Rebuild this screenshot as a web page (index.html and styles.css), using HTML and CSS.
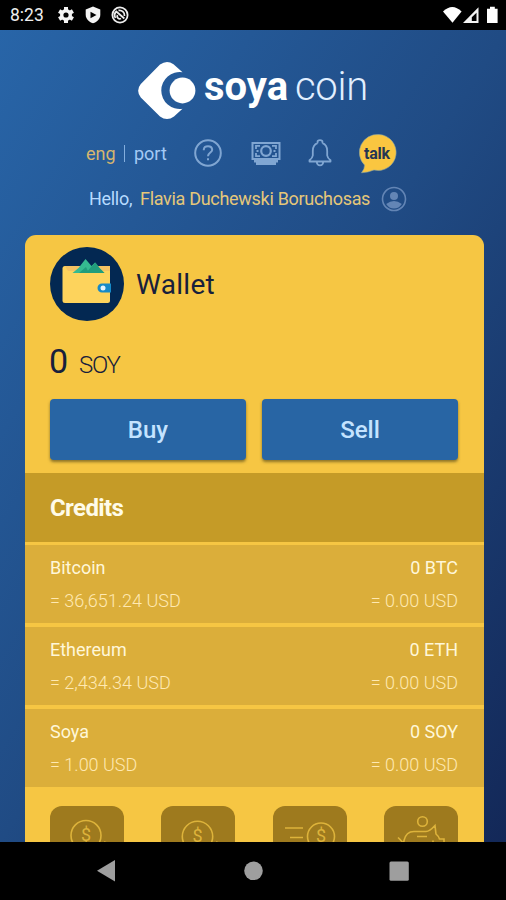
FILE: index.html
```
<!DOCTYPE html>
<html lang="en">
<head>
  <meta charset="UTF-8" />
  <meta name="viewport" content="width=device-width, initial-scale=1.0" />
  <title>Soya Coin</title>
  <link rel="stylesheet" href="styles.css">
</head>
<body>
  <div class="status-bar">
    <span class="time">8:23</span>
    <svg class="status-left" width="72" height="20" viewBox="0 0 72 20">
      <g fill="none" stroke="#f4f4f4">
        <circle cx="8" cy="10" r="4.3" stroke-width="3.4"/>
        <path stroke-width="4" d="M8 2v3M8 15v3M1.1 6l2.5 1.5M12.4 12.5l2.5 1.5M1.1 14l2.5-1.5M12.4 7.5l2.5-1.5"/>
      </g>
      <path fill="#f4f4f4" d="M35 1.5l7.3 3v5.2c0 4-3 7.2-7.3 8.6-4.300-1.400-7.300-4.600-7.300-8.600v-5.200z"/>
      <path fill="#000" d="M32.500 6.800l6 3.200-6 3.200z"/>
      <circle cx="62" cy="10" r="7.600" fill="none" stroke="#eee" stroke-width="1.800"/>
      <path d="M57.500 13a5.200 5.200 0 0 1 .8-6.500l8 7M60.500 5.500a5 5 0 0 1 6 5.500M59.500 10a2.600 2.600 0 0 0 3.500 3.500" fill="none" stroke="#eee" stroke-width="1.800"/>
    </svg>
    <svg class="status-right" width="56" height="20" viewBox="0 0 56 20">
      <path fill="#fff" d="M0 6.500Q9.300-2.500 18.600 6.500L9.500 17.800z"/>
      <path fill="#f4f4f4" fill-rule="evenodd" d="M20 18L35.500 2.300V18zM28.800 12.200v3.800h4.700V7.800z"/>
      <path fill="#fff" d="M44 3.700h3V1.700h4.800v2h2.800V18H44z"/>
    </svg>
  </div>

  <main class="app">
    <div class="logo">
      <svg width="62" height="62" viewBox="0 0 62 62">
        <path fill="#fff" d="M23 4.500Q30-.5 36.500 4.300L45.500 12.200A18.500 18.500 0 1 0 45.500 48.800L37 56.500Q30 61.500 23 56.500L3.800 37.500Q-1.500 30.500 3.800 24z"/>
        <circle cx="45.500" cy="30.500" r="12.900" fill="#fff"/>
      </svg>
      <span class="logo-bold">soya</span><span class="logo-light">coin</span>
    </div>

    <div class="toolbar">
      <div class="languages"><span class="active">eng</span><span class="divider"></span><span class="port">port</span></div>
      <svg class="icon-help" width="28" height="28" viewBox="0 0 28 28" fill="none" stroke="#80a6d2" stroke-width="2">
        <circle cx="14" cy="14" r="12.800"/>
        <path d="M9.800 11.200V10.500Q10 7.200 14 7.200T18.200 10.700C18.200 13.600 14 13.500 14 17.300M14 19.200v2"/>
      </svg>
      <svg class="icon-money" width="30" height="25" viewBox="0 0 30 25" fill="none" stroke="#80a6d2">
        <path stroke-width="2" d="M1.500 2h27v16h-27z"/>
        <circle cx="15" cy="10" r="4.800" stroke-width="2.200"/>
        <path stroke-width="1.800" d="M9 4.800H5V8M5 12v3.200h4M21 4.800h4V8M25 12v3.200h-4M5.500 10h2M22.500 10h2"/>
        <path stroke-width="2.600" d="M3 20.200h24M5 22.800h20"/>
      </svg>
      <svg class="icon-bell" width="24" height="28" viewBox="0 0 24 28" fill="none" stroke="#80a6d2" stroke-width="1.800" stroke-linejoin="round">
        <path d="M9.500 4.200V3Q9.500 1.200 12 1.200T14.500 3v1.200M9.500 4.200C6 5.500 4.800 8.500 4.800 12v4.500Q4.500 19 1.500 21.300v1.200h21v-1.200Q19.500 19 19.200 16.500V12C19.200 8.500 18 5.500 14.500 4.200M8.700 22.700Q9 26.300 12 26.300T15.300 22.700"/>
      </svg>
      <div class="talk">
        <svg width="39" height="40" viewBox="0 0 39 40">
          <path fill="#fac640" stroke="#8fa6a0" stroke-width=".6" d="M20 .5a18 18 0 1 1-5 35.500Q9 38.500 2.500 38.800 5.800 35 5.500 31A18 18 0 0 1 20 .5z"/>
        </svg>
        <span>talk</span>
      </div>
    </div>

    <div class="greeting">
      <span class="hello">Hello,</span>
      <span class="username">Flavia Duchewski Boruchosas</span>
      <svg width="26" height="26" viewBox="0 0 26 26">
        <circle cx="13" cy="13" r="11.500" fill="none" stroke="#6385b5" stroke-width="1.600"/>
        <circle cx="13" cy="10" r="4" fill="#6385b5"/>
        <path fill="#6385b5" d="M5.200 18Q13 12 20.800 18 18 22.600 13 22.600T5.200 18z"/>
      </svg>
    </div>

    <section class="card">
      <div class="wallet">
        <svg width="74" height="74" viewBox="0 0 74 74">
          <circle cx="37" cy="37" r="37" fill="#032852"/>
          <rect x="12.500" y="19" width="47.500" height="37" rx="2.500" fill="#fdd35c"/>
          <path fill="#f2c263" d="M15 19h45v5H18z"/>
          <path fill="#35ba91" d="M22.500 26l6-5 7-9 6 7 3.500-3.500 4.500 5.500 5 5z"/>
          <path fill="#219d7c" d="M36 26l5-6 4.500-4.500L49.500 21l5 5zM29 26l7-6 3 6z"/>
          <path fill="#168ac8" d="M52 36.500h9v9h-9a4.500 4.500 0 0 1 0-9z"/>
          <circle cx="53" cy="41" r="2.500" fill="#e3f4ff"/>
        </svg>
        <span>Wallet</span>
      </div>
      <div class="balance"><span class="amount">0</span><span class="coin">SOY</span></div>
      <div class="buttons">
        <button>Buy</button>
        <button>Sell</button>
      </div>
      <h2>Credits</h2>
      <div class="credits">
        <div class="credit">
          <div class="line"><span>Bitcoin</span><span>0 BTC</span></div>
          <div class="line usd"><span>= 36,651.24 USD</span><span>= 0.00 USD</span></div>
        </div>
        <div class="credit">
          <div class="line"><span>Ethereum</span><span>0 ETH</span></div>
          <div class="line usd"><span>= 2,434.34 USD</span><span>= 0.00 USD</span></div>
        </div>
        <div class="credit">
          <div class="line"><span>Soya</span><span>0 SOY</span></div>
          <div class="line usd"><span>= 1.00 USD</span><span>= 0.00 USD</span></div>
        </div>
      </div>
      <div class="actions">
        <div class="action">
          <svg width="74" height="74" viewBox="0 0 74 74"><circle cx="36" cy="29.500" r="15"/><path d="M54 36l3 1"/><text x="36" y="35">$</text></svg>
        </div>
        <div class="action">
          <svg width="74" height="74" viewBox="0 0 74 74"><circle cx="36.500" cy="30.500" r="15.200"/><path d="M55 36l3 1"/><text x="36.500" y="35.500">$</text></svg>
        </div>
        <div class="action">
          <svg width="74" height="74" viewBox="0 0 74 74"><circle cx="48" cy="30.500" r="13.500"/><path d="M12 22h18M17 31.500h13"/><text x="48" y="35.500">$</text></svg>
        </div>
        <div class="action">
          <svg width="74" height="74" viewBox="0 0 74 74"><circle cx="38.500" cy="15.500" r="4.800"/><path d="M14 31.500Q17 34 19 37M17 37.500q3 0 3-3Q22 25.500 30 25.500h12q3.500 0 9-6l1 8.500q2.500 2 3.500 5h4.500v5M33 30.500h10"/><path d="M49 34.500v1.500"/></svg>
        </div>
      </div>
    </section>
  </main>

  <nav class="nav-bar">
    <svg width="506" height="58" viewBox="0 0 506 58" fill="#9e9e9e">
      <path d="M97 28.700L115 18v21.500z"/>
      <circle cx="253.500" cy="28.800" r="9.300"/>
      <rect x="389.500" y="19.500" width="19.300" height="19.300" rx="1.500"/>
    </svg>
  </nav>
</body>
</html>
```
FILE: styles.css
```
html, body {
  margin: 0;
  padding: 0;
  height: 900px;
  overflow: hidden;
  font-family: Roboto, "Liberation Sans", sans-serif;
}

body {
  display: flex;
  flex-direction: column;
  width: 506px;
  background-color: #000;
}

svg {
  flex: none;
  display: block;
}

.status-bar {
  height: 30px;
  flex: none;
  display: flex;
  align-items: center;
  padding: 0 7px 0 10px;
  box-sizing: border-box;
}

.time {
  width: 48px;
  font-size: 17.5px;
  color: #eee;
}

.status-right {
  margin-left: auto;
}

.app {
  height: 812px;
  overflow: hidden;
  background: linear-gradient(to bottom right, #2865a8 0%, #204b84 50%, #132858 100%);
}

.logo {
  display: flex;
  align-items: center;
  height: 62px;
  padding: 29px 0 0 137px;
  color: #fff;
  line-height: 62px;
}

.logo svg {
  margin-top: 1px;
}

.logo-bold {
  margin: -6px 0 0 5px;
  width: 91px;
  font-size: 40px;
  font-weight: 700;
}

.logo-light {
  margin-top: -6px;
  font-size: 40px;
  font-weight: 300;
  letter-spacing: -0.3px;
  color: #e1efff;
}

.toolbar {
  display: flex;
  align-items: center;
  height: 44px;
  padding: 10px 0 0 86px;
  color: #a4caf5;
}

.languages {
  display: flex;
  align-items: center;
  width: 108px;
  font-size: 18px;
}

.active {
  width: 38px;
  color: #d6b66f;
}

.divider {
  width: 1px;
  height: 17px;
  margin-right: 9px;
  background-color: #83aede;
}

.icon-money {
  margin-left: 29px;
}

.icon-bell {
  margin-left: 27px;
}

.talk {
  position: relative;
  margin: 1px 0 0 27px;
}

.talk span {
  position: absolute;
  left: 5px;
  top: 10px;
  font-size: 16px;
  font-weight: 700;
  letter-spacing: -0.2px;
  color: #253553;
}

.greeting {
  display: flex;
  align-items: center;
  height: 48px;
  padding-left: 89px;
  font-size: 18px;
  line-height: 40px;
  color: #b7dbff;
}

.hello {
  width: 51px;
  letter-spacing: -0.3px;
}

.username {
  width: 241px;
  color: #e5c779;
  letter-spacing: -0.3px;
  white-space: nowrap;
}

.card {
  width: 459px;
  height: 640px;
  margin: 12px 0 0 25px;
  border-radius: 11px 11px 0 0;
  background-color: #f6c643;
  color: #17203c;
}

.wallet {
  display: flex;
  align-items: center;
  gap: 12px;
  padding: 12px 25px 0;
  font-size: 28px;
  letter-spacing: 0.3px;
}

.balance {
  display: flex;
  align-items: baseline;
  height: 78px;
  padding-left: 24px;
  line-height: 80px;
}

.amount {
  width: 30px;
  font-size: 34px;
}

.coin {
  font-size: 24px;
  font-weight: 300;
  letter-spacing: -1.2px;
}

.buttons {
  display: flex;
  gap: 16px;
  padding: 0 26px 13px 25px;
}

button {
  flex: 1;
  height: 61px;
  padding: 0;
  border: none;
  border-radius: 4px;
  background-color: #2865a4;
  box-shadow: 0 2px 3px rgba(70, 60, 20, 0.6);
  color: #c4e3ff;
  font-family: inherit;
  font-size: 24px;
  font-weight: 500;
}

h2 {
  height: 69px;
  margin: 0 0 3px;
  padding-left: 25px;
  background-color: #c59b27;
  color: #fffbe9;
  font-size: 24px;
  line-height: 70px;
  letter-spacing: -0.6px;
}

.credits {
  display: flex;
  flex-direction: column;
  gap: 4px;
}

.credit {
  height: 78px;
  padding: 6px 26px 0 25px;
  box-sizing: border-box;
  background-color: #dbae3a;
}

.line {
  display: flex;
  justify-content: space-between;
  height: 33px;
  color: #fff7d9;
  font-size: 18px;
  line-height: 33px;
}

.usd {
  color: #ffe9b2;
  font-weight: 300;
}

.actions {
  display: flex;
  justify-content: space-between;
  padding: 19px 26px 0 25px;
}

.action {
  width: 74px;
  height: 74px;
  border-radius: 12px;
  background-color: #9e7a1e;
}

.action svg {
  fill: none;
  stroke: #ddb33b;
  stroke-width: 1.6;
}

.action text {
  fill: #ddb33b;
  stroke: none;
  font-size: 18px;
  text-anchor: middle;
}

.nav-bar {
  height: 58px;
  flex: none;
  background-color: #000;
}
```
